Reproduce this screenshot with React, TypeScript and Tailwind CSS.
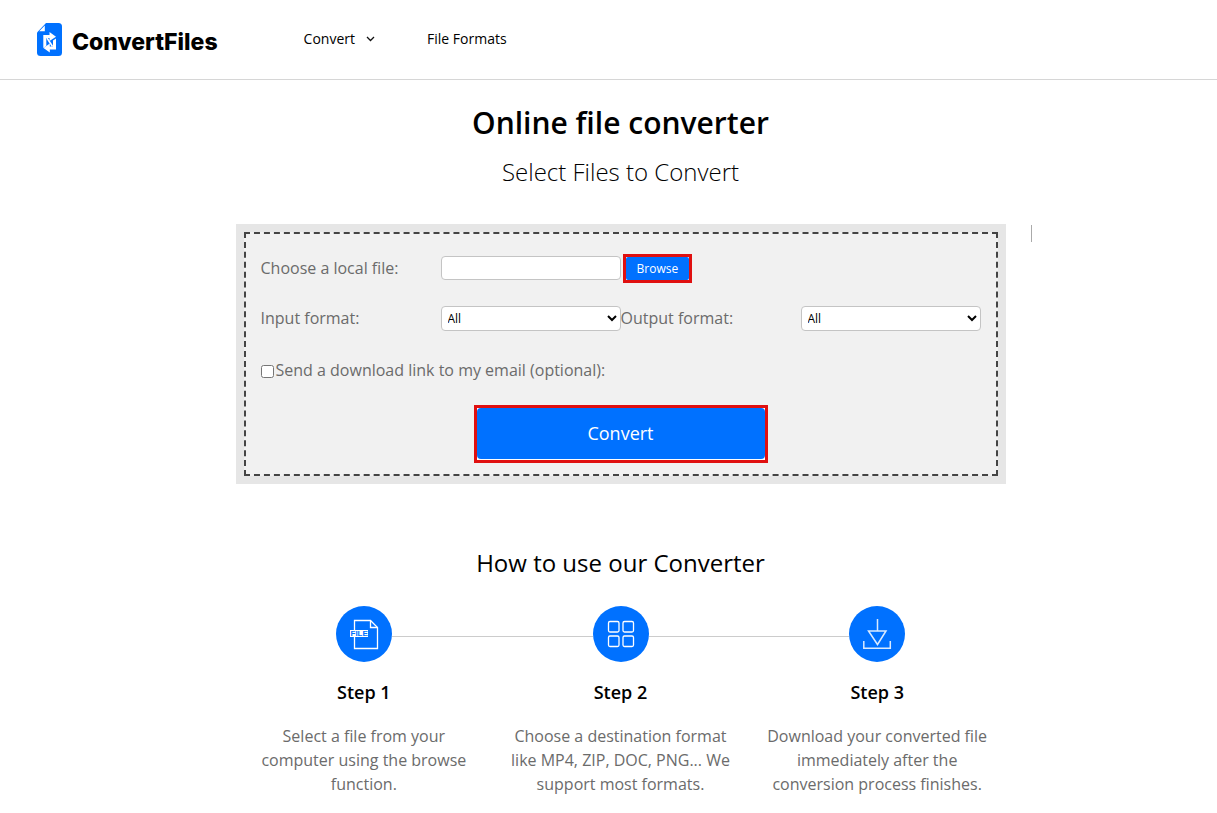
import type { ReactNode } from 'react';

function Logo() {
  return (
    <a href="#" className="flex items-center gap-2.5" aria-label="ConvertFiles">
      <svg width="25" height="33" viewBox="0 0 25 33" aria-hidden="true">
        <path d="M9 0H21.500Q25 0 25 3.500V29.500Q25 33 21.500 33H3.500Q0 33 0 29.500V9.500Z" fill="#0071ff" />
        <path d="M7.800 2.600V8.300H2.200Z" fill="#fff" />
        <path d="M6.300 25V12H12.500V9L19 13.700L12.500 18V15H9.300V23Z" fill="#fff" />
        <path d="M19 15.500V26.500H12.800V29.500L6.500 25L12.800 20.500V23.500H16V17.500Z" fill="#fff" />
        <path d="M10 15L15.500 23.500" stroke="#fff" strokeWidth="1.600" fill="none" />
      </svg>
      <span className="pt-1 font-['Inter'] text-[23px] leading-8 font-extrabold text-black">ConvertFiles</span>
    </a>
  );
}

function FileIcon() {
  return (
    <svg width="56" height="56" viewBox="0 0 56 56" fill="none" stroke="#fff" strokeWidth="1.300" aria-hidden="true">
      <path d="M18.500 24V14.500H34.500L41.500 21.500V42.500H18.500V31" />
      <path d="M34.500 14.500V21.500H41.500" />
      <rect x="14" y="24" width="18" height="7" fill="#fff" stroke="none" />
      <text x="14.500" y="30.300" fill="#0071ff" stroke="none" fontSize="8" fontWeight="700" fontFamily="Liberation Sans, sans-serif">FILE</text>
    </svg>
  );
}

function GridIcon() {
  return (
    <svg width="56" height="56" viewBox="0 0 56 56" fill="none" stroke="#fff" strokeWidth="1.300" aria-hidden="true">
      <rect x="15.500" y="15.500" width="10.500" height="10.500" rx="1.500" />
      <rect x="30" y="15.500" width="10.500" height="10.500" rx="1.500" />
      <rect x="15.500" y="30" width="10.500" height="10.500" rx="1.500" />
      <rect x="30" y="30" width="10.500" height="10.500" rx="1.500" />
    </svg>
  );
}

function DownloadIcon() {
  return (
    <svg width="56" height="56" viewBox="0 0 56 56" fill="none" stroke="#fff" strokeOpacity="0.850" strokeWidth="1.500" aria-hidden="true">
      <path d="M28.500 13V25M19.500 25H37L28.500 38.500Z" />
      <path d="M14.800 35V42.300H41.300V35" />
    </svg>
  );
}

const steps: { title: string; text: string; icon: ReactNode }[] = [
  { title: 'Step 1', text: 'Select a file from your computer using the browse function.', icon: <FileIcon /> },
  { title: 'Step 2', text: 'Choose a destination format like MP4, ZIP, DOC, PNG... We support most formats.', icon: <GridIcon /> },
  { title: 'Step 3', text: 'Download your converted file immediately after the conversion process finishes.', icon: <DownloadIcon /> },
];

const fieldClass = 'w-full rounded border border-[#c4c4c4] bg-white text-xs text-black';

function ConvertForm() {
  return (
    <form className="bg-[#e6e6e6] p-2" onSubmit={(e) => e.preventDefault()}>
      <div className="border-2 border-dashed border-[#444] bg-[#f1f1f1] px-[15px] pt-[18px] pb-[11px] text-[#6b6b6b]">
        <div className="grid grid-cols-4 items-center">
          <label htmlFor="file" className="leading-8">Choose a local file:</label>
          <input id="file" type="text" className={`${fieldClass} h-6 px-1`} />
          <div className="pl-0.5">
            <button type="button" className="block border-3 border-[#e01010] bg-white">
              <span className="block rounded-xs bg-[#0071ff] px-[11px] text-xs leading-[23px] text-white">Browse</span>
            </button>
          </div>
        </div>
        <div className="mt-[18px] grid grid-cols-4 items-center">
          <label htmlFor="input-format" className="leading-8">Input format:</label>
          <select id="input-format" className={`${fieldClass} h-[25px] px-0.5`}>
            <option>All</option>
          </select>
          <label htmlFor="output-format" className="leading-8">Output format:</label>
          <select id="output-format" className={`${fieldClass} h-[25px] px-0.5`}>
            <option>All</option>
          </select>
        </div>
        <div className="mt-5 flex items-center">
          <input id="email" type="checkbox" className="mt-0.5 mr-0.5 size-[13px]" />
          <label htmlFor="email" className="leading-8">Send a download link to my email (optional):</label>
        </div>
        <button type="submit" className="mx-auto mt-[19px] block w-full max-w-[294px] border-3 border-[#e01010] bg-white pb-px">
          <span className="block rounded bg-[#0071ff] text-lg leading-[51px] text-white">Convert</span>
        </button>
      </div>
    </form>
  );
}

export default function App() {
  return (
    <div className="min-h-screen bg-white font-['Open_Sans',sans-serif] text-base text-black">
      <header className="flex h-20 items-center border-b border-[#d6d6d6] pl-[37px]">
        <Logo />
        <nav className="ml-[86px] flex items-center gap-[52px] pb-0.5 text-sm">
          <a href="#" className="flex items-center gap-[11px]">
            Convert
            <svg width="9" height="6" viewBox="0 0 9 6" fill="none" stroke="#111" strokeWidth="1.300" aria-hidden="true">
              <path d="M1 1L4.500 4.500L8 1" />
            </svg>
          </a>
          <a href="#">File Formats</a>
        </nav>
      </header>
      <main className="pl-6">
        <h1 className="mt-[23px] text-center text-3xl leading-10 font-semibold">Online file converter</h1>
        <p className="mt-[13px] text-center text-2xl leading-8 font-light">Select Files to Convert</p>
        <div className="mt-9 grid grid-cols-[1fr_minmax(0,770px)_1fr]">
          <div className="col-start-2">
            <ConvertForm />
          </div>
          <div className="ml-[25px] mt-px h-[17px] w-px bg-[#aaa]" />
        </div>
        <section className="mx-auto mt-[63px] max-w-[770px]">
          <h2 className="text-center text-2xl leading-8">How to use our Converter</h2>
          <ol className="mt-[27px] grid grid-cols-3">
            {steps.map((step, i) => (
              <li key={step.title} className="text-center">
                <div className="flex items-center">
                  <span className={i > 0 ? 'mt-1 h-px flex-1 bg-[#ccc]' : 'flex-1'} />
                  <span className="size-14 rounded-full bg-[#0071ff]">{step.icon}</span>
                  <span className={i < 2 ? 'mt-1 h-px flex-1 bg-[#ccc]' : 'flex-1'} />
                </div>
                <h3 className="mt-[18px] text-lg leading-6 font-semibold">{step.title}</h3>
                <p className="mt-5 px-4 leading-6 text-[#6b6b6b]">{step.text}</p>
              </li>
            ))}
          </ol>
        </section>
      </main>
    </div>
  );
}
